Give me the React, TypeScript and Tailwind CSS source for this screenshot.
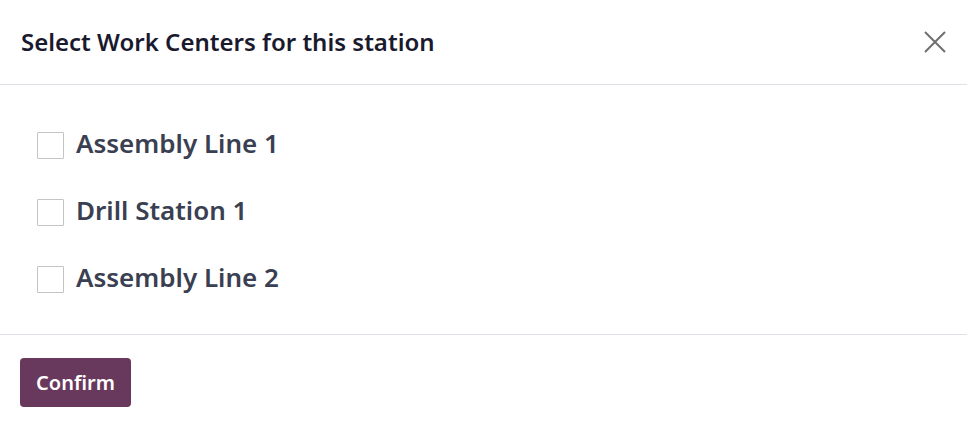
import React from "react";

const items = ["Assembly Line 1", "Drill Station 1", "Assembly Line 2"];

export default function App() {
  return (
    <div
      className="w-[967px] h-[429px] bg-white flex flex-col"
      style={{ fontFamily: '"Noto Sans", "Open Sans", sans-serif' }}
    >
      <div className="h-[85px] shrink-0 flex items-center justify-between pl-[21px] pr-[20px] border-b border-[#dee2e6]">
        <h1 className="text-[24px] font-semibold text-[#1a1a2e] leading-none mb-[1px]">
          Select Work Centers for this station
        </h1>
        <svg width="24" height="24" viewBox="0 0 24 24">
          <path d="M2 2 L22 22 M22 2 L2 22" stroke="#6f6f6f" strokeWidth="2" fill="none" />
        </svg>
      </div>
      <div className="flex flex-col gap-[40px] pt-[47px] pb-[41px] px-[37px] border-b border-[#dee2e6]">
        {items.map((t) => (
          <label key={t} className="flex items-center gap-[12px] h-[27px]">
            <span className="w-[27px] h-[27px] border border-[#c4c4c4] bg-white rounded-[1px] shrink-0" />
            <span className="text-[26px] font-semibold text-[#3a3f51] leading-none mb-[5px]">{t}</span>
          </label>
        ))}
      </div>
      <div className="pt-[23px] px-[20px]">
        <button className="w-[111px] h-[49px] bg-[#68385d] rounded-[4px] text-white text-[20px] font-semibold">
          Confirm
        </button>
      </div>
    </div>
  );
}
